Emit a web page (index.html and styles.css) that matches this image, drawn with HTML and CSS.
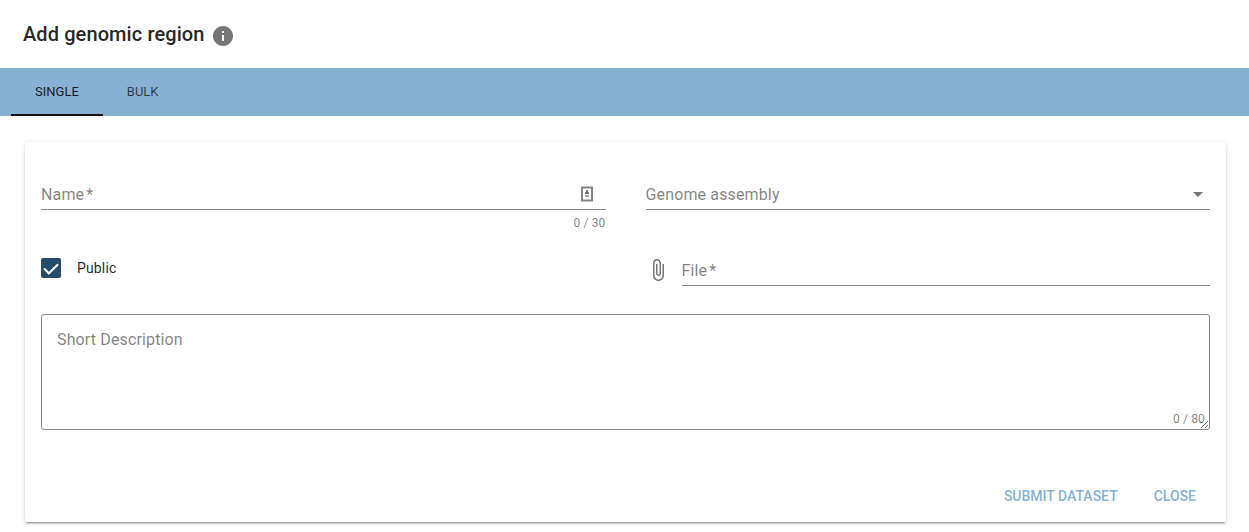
FILE: index.html
```html
<!DOCTYPE html>
<html lang="en">
<head>
<meta charset="utf-8">
<title>Add genomic region</title>
<link rel="stylesheet" href="styles.css">
</head>
<body>
<header class="header">
  <h1 class="title">Add genomic region</h1>
  <svg class="info" viewBox="0 0 24 24" aria-hidden="true"><path d="M12 2C6.48 2 2 6.48 2 12s4.48 10 10 10 10-4.48 10-10S17.52 2 12 2zm1 15h-2v-6h2v6zm0-8h-2V7h2v2z"/></svg>
</header>
<nav class="tabs">
  <button class="tab tab-active" type="button">SINGLE</button>
  <button class="tab" type="button">BULK</button>
</nav>
<main class="main">
  <form class="card">
    <div class="fields">
      <div class="cell">
        <div class="field">
          <input class="control" id="name" type="text">
          <label class="label" for="name">Name<span class="required">*</span></label>
          <svg class="contact" viewBox="0 0 12 16" aria-hidden="true"><path class="contact-frame" d="M1 1.500h10v13H1z"/><path class="contact-person" d="M5 4h2v2h1v2H4V6h1z"/><path class="contact-base" d="M4 9h4v2H4z"/></svg>
        </div>
        <span class="counter">0 / 30</span>
      </div>
      <div class="cell">
        <div class="field">
          <select class="control" id="assembly"><option value=""></option><option value="hg19">hg19</option><option value="hg38">hg38</option></select>
          <label class="label" for="assembly">Genome assembly</label>
          <svg class="arrow" viewBox="0 0 24 24" aria-hidden="true"><path d="M7 10l5 5 5-5z"/></svg>
        </div>
      </div>
      <div class="cell cell-short">
        <label class="check"><input class="checkbox" type="checkbox" checked>Public</label>
      </div>
      <div class="cell cell-short file-row">
        <svg class="clip" viewBox="0 0 24 24" aria-hidden="true"><path d="M16.5 6v11.500c0 2.210-1.790 4-4 4s-4-1.790-4-4V5c0-1.380 1.120-2.500 2.500-2.500s2.500 1.120 2.500 2.500v10.500c0 .55-.45 1-1 1s-1-.45-1-1V6H10v9.500c0 1.380 1.120 2.500 2.500 2.500s2.500-1.120 2.500-2.500V5c0-2.210-1.790-4-4-4S7 2.790 7 5v12.500c0 3.040 2.460 5.500 5.500 5.500s5.500-2.460 5.500-5.500V6h-1.500z"/></svg>
        <div class="field">
          <input class="control" id="file" type="text" readonly>
          <label class="label" for="file">File<span class="required">*</span></label>
        </div>
      </div>
    </div>
    <div class="description">
      <textarea class="area" id="description"></textarea>
      <label class="area-label" for="description">Short Description</label>
      <span class="area-counter">0 / 80</span>
    </div>
    <div class="actions">
      <button class="action" type="button">SUBMIT DATASET</button>
      <button class="action" type="button">CLOSE</button>
    </div>
  </form>
</main>
</body>
</html>
```
FILE: styles.css
```css
* { box-sizing: border-box; }
body { margin: 0; background: #fff; color: rgba(0, 0, 0, .87); font-family: Roboto, sans-serif; font-size: 14px; line-height: 20px; letter-spacing: .01em; }
button, input, select, textarea { font: inherit; letter-spacing: inherit; color: inherit; }
.header { display: flex; align-items: center; gap: 6px; height: 68px; padding: 0 23px; }
.title { margin: 0; font-size: 20px; font-weight: 500; line-height: 26px; letter-spacing: .005em; }
.info { width: 24px; height: 24px; margin-top: 4px; fill: #757575; }
.tabs { display: flex; height: 48px; padding: 0 11px; background: #87b1d4; }
.tab { padding: 2px 24px 0; border: 0; border-bottom: 2px solid transparent; background: none; font-size: 13px; font-weight: 400; letter-spacing: 0; color: rgba(0, 0, 0, .68); }
.tab-active { border-color: #111; color: rgba(0, 0, 0, .87); }
.main { padding: 26px 23px 10px 25px; }
.card { padding: 36px 16px 8px; border-radius: 2px; background: #fff; box-shadow: 0 3px 1px -2px rgba(0, 0, 0, .2), 0 2px 2px rgba(0, 0, 0, .14), 0 1px 5px rgba(0, 0, 0, .12); }
.fields { display: grid; grid-template-columns: 1fr 1fr; column-gap: 40px; }
.cell { height: 76px; }
.field { position: relative; flex: 1; height: 32px; }
.control { display: block; width: 100%; height: 32px; padding: 0; border: 0; border-bottom: 1px solid #8b8b8b; border-radius: 0; outline: 0; background: none; appearance: none; font-size: 16px; }
.label, .area-label { position: absolute; color: rgba(0, 0, 0, .5); font-size: 16px; pointer-events: none; }
.label { left: 0; top: 7px; }
.required { margin-left: 2px; }
.contact { position: absolute; right: 13px; top: 8px; width: 12px; height: 16px; }
.contact-frame { fill: none; stroke: #858585; stroke-width: 2; }
.contact-person { fill: #777; }
.contact-base { fill: #aaa; }
.arrow { position: absolute; right: 0; top: 4px; width: 24px; height: 24px; fill: #757575; pointer-events: none; }
.counter { display: block; padding-top: 3px; text-align: right; font-size: 12px; color: rgba(0, 0, 0, .5); }
.check { display: flex; align-items: center; gap: 16px; width: fit-content; padding-top: 4px; }
.checkbox { display: grid; place-items: center; width: 20px; height: 20px; margin: 0; border-radius: 2px; background: #264c69; appearance: none; }
.checkbox:checked::before { content: ""; width: 6px; height: 12px; margin-bottom: 3px; border: solid #fff; border-width: 0 2px 2px 0; transform: rotate(45deg); }
.file-row { display: flex; gap: 12px; }
.clip { width: 24px; height: 24px; margin-top: 4px; fill: #757575; }
.cell-short { height: 60px; }
.description { position: relative; height: 116px; }
.area { display: block; width: 100%; height: 116px; padding: 15px; border: 1px solid #8b8b8b; border-radius: 3px; outline: 0; background: none; font-size: 16px; resize: vertical; }
.area-label { left: 16px; top: 16px; }
.area-counter { position: absolute; right: 5px; bottom: 1px; font-size: 12px; color: rgba(0, 0, 0, .5); pointer-events: none; }
.actions { display: flex; justify-content: flex-end; gap: 8px; padding-top: 48px; }
.action { height: 36px; padding: 0 14px; border: 0; background: none; color: #87b1d4; font-weight: 500; letter-spacing: 0; }
```
